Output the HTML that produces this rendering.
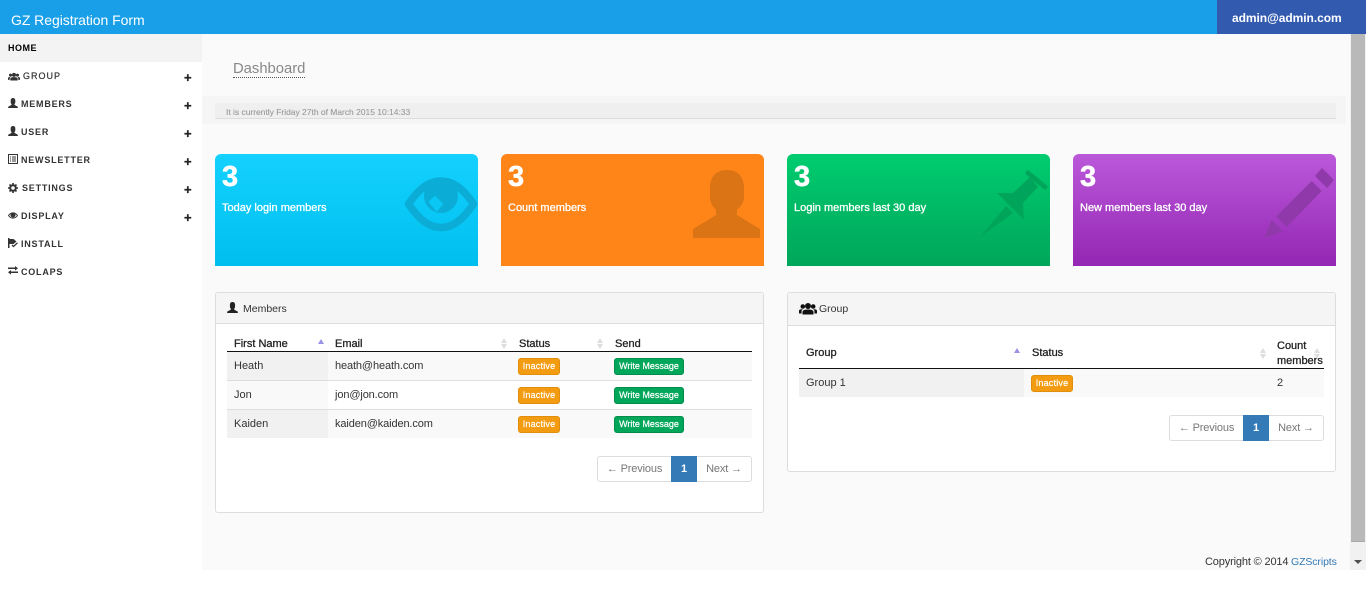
<!DOCTYPE html>
<html><head><meta charset="utf-8"><title>GZ Registration Form</title>
<style>
html,body{margin:0;padding:0;width:1366px;height:599px;overflow:hidden;background:#fff;font-family:"Liberation Sans",sans-serif;font-size:11px;color:#333}
div,span,a,svg{position:absolute;white-space:nowrap}
.n{font-size:9px;font-weight:bold;letter-spacing:.78px;color:#333;line-height:12px}
.p{font-size:13px;font-weight:bold;color:#222;line-height:12px;left:184px;-webkit-text-stroke:.3px #222}
.card{top:154px;width:263px;height:112px;border-radius:6px 6px 0 0}
.num{top:161px;font-size:29px;font-weight:bold;color:#fff;line-height:32px;-webkit-text-stroke:.5px #fff}
.lbl{top:202px;font-size:11px;color:#fff;line-height:13px;-webkit-text-stroke:.3px #fff}
.panel{background:#fff;border:1px solid #ddd;border-radius:3px;box-sizing:border-box}
.ph{background:#f5f5f5;border-bottom:1px solid #ddd;left:0;top:0;right:0;border-radius:3px 3px 0 0;box-sizing:border-box}
.t{line-height:13px}
.th{line-height:13px;color:#222;-webkit-text-stroke:.3px #222}
.b1,.b2{font-size:9px;color:#fff;border-radius:3px;box-sizing:border-box;height:17px;line-height:14px;text-align:center;-webkit-text-stroke:.2px #fff}
.b1{background:#f39c12;border:1px solid #e08e0b;width:42px;letter-spacing:.2px}
.b2{background:#00a65a;border:1px solid #008d4c;width:70px}
.pg{background:#fff;border:1px solid #ddd;box-sizing:border-box;height:26px;line-height:25px;text-align:center;color:#777;font-size:11px;letter-spacing:-.15px}
.cur{background:#337ab7;border:1px solid #337ab7;color:#fff;font-weight:bold;box-sizing:border-box;height:26px;line-height:25px;text-align:center;font-size:11px}
.up{width:0;height:0;border-left:3.5px solid transparent;border-right:3.5px solid transparent;border-bottom:5px solid #9a92e6}
.s{width:6px;height:11px}
</style></head><body>
<svg width="0" height="0" style="left:0;top:0"><defs>
<symbol id="u" viewBox="0 0 12 12"><path d="M6 0C4.200 0 3.200 1.200 3.200 3v2c0 1 .5 1.900 1 2.400V8.300L.2 10.500V12h11.600v-1.500L7.800 8.300V7.400c.5-.5 1-1.400 1-2.400V3C8.800 1.200 7.800 0 6 0z"/></symbol>
<symbol id="g" viewBox="0 0 18 12"><circle cx="9" cy="3.500" r="3"/><path d="M3.500 12V9.500C3.500 7.500 6 7 9 7s5.500.5 5.500 2.500V12z"/><circle cx="3.800" cy="4" r="2.300"/><circle cx="14.200" cy="4" r="2.300"/><path d="M0 11V8.500C0 7 1.500 6.800 3.800 6.800L2.600 8v3zM18 11V8.500C18 7 16.500 6.800 14.200 6.800L15.400 8v3z"/></symbol>
<symbol id="s" viewBox="0 0 6 11"><path d="M3 0L6 5H0zM3 11L0 6H6z" fill="#dedede"/></symbol>
</defs></svg>

<!-- top bar -->
<div style="left:0;top:0;width:1366px;height:34px;background:#189fe8"></div>
<div style="left:1217px;top:0;width:149px;height:34px;background:#325bb0"></div>
<div style="left:11px;top:11px;font-size:14px;line-height:18px;color:#fff;letter-spacing:-.05px">GZ Registration Form</div>
<div style="left:1232px;top:11px;font-size:12px;font-weight:bold;line-height:15px;color:#fff;letter-spacing:-.05px">admin@admin.com</div>

<!-- main bg -->
<div style="left:202px;top:34px;width:1148px;height:536px;background:#fafafa"></div>

<!-- scrollbar -->
<div style="left:1350px;top:34px;width:16px;height:536px;background:#f1f1f1"></div>
<div style="left:1351px;top:34px;width:14px;height:508px;background:#b9b9b9;border-bottom:1px solid #a8a8a8;box-sizing:border-box"></div>
<div style="left:1354px;top:560px;width:0;height:0;border-left:4px solid transparent;border-right:4px solid transparent;border-top:4px solid #505050"></div>

<!-- sidebar -->
<div style="left:0;top:34px;width:202px;height:28px;background:#f3f3f3"></div>
<div class="n" style="left:8px;top:42px;color:#000;letter-spacing:.5px">HOME</div>
<svg style="left:8px;top:72px" width="12" height="9" fill="#333"><use href="#g"/></svg>
<div class="n" style="left:23px;top:70px;font-weight:normal;letter-spacing:1px;-webkit-text-stroke:.2px #333">GROUP</div><div class="p" style="top:72px">+</div>
<svg style="left:8px;top:98px" width="10" height="10" fill="#333"><use href="#u"/></svg>
<div class="n" style="left:21px;top:98px">MEMBERS</div><div class="p" style="top:100px">+</div>
<svg style="left:8px;top:126px" width="10" height="10" fill="#333"><use href="#u"/></svg>
<div class="n" style="left:21px;top:126px">USER</div><div class="p" style="top:128px">+</div>
<svg style="left:8px;top:154px" width="10" height="10" fill="none" stroke="#333"><path d="M.5.500h9v9h-9zM2 3h1M4 3h4M2 5h1M4 5h4M2 7h1M4 7h4"/></svg>
<div class="n" style="left:21px;top:154px">NEWSLETTER</div><div class="p" style="top:156px">+</div>
<svg style="left:8px;top:183px" width="10" height="10" fill="none" stroke="#333"><circle cx="5" cy="5" r="2.800" stroke-width="2"/><path d="M5 0v2M5 8v2M0 5h2M8 5h2M1.500 1.500l1.200 1.200M7.300 7.300l1.200 1.200M1.500 8.500l1.200-1.200M7.300 2.700l1.200-1.200" stroke-width="1.600"/></svg>
<div class="n" style="left:22px;top:182px">SETTINGS</div><div class="p" style="top:184px">+</div>
<svg style="left:8px;top:211px" width="10" height="9" fill="none" stroke="#333"><path d="M.5 4.500C3 1 7 1 9.500 4.500 7 8 3 8 .5 4.500z"/><circle cx="5" cy="4" r="2" fill="#333"/></svg>
<div class="n" style="left:21px;top:210px">DISPLAY</div><div class="p" style="top:212px">+</div>
<svg style="left:8px;top:238px" width="10" height="10" fill="#333"><path d="M0 0h1.500v10H0zM1.500 1h4l3 2.500-3 2.500h-4z"/><path d="M4 7l1.500 1.500L9.500 4.800" fill="none" stroke="#333" stroke-width="1.300"/></svg>
<div class="n" style="left:21px;top:238px">INSTALL</div>
<svg style="left:8px;top:266px" width="10" height="9" fill="#333"><path d="M0 1.500h7V0l3 2.300-3 2.300V3H0zM10 5.500H3V4L0 6.300 3 8.600V7h7z"/></svg>
<div class="n" style="left:21px;top:266px">COLAPS</div>

<!-- dashboard heading -->
<div style="left:233px;top:61px;font-size:14.800px;line-height:16px;height:16px;color:#888;border-bottom:1px dotted #555">Dashboard</div>
<div style="left:202px;top:96px;width:1144px;height:28px;background:#f5f5f5"></div>
<div style="left:215px;top:103px;width:1121px;height:16px;background:#efefef;border-bottom:1px solid #ddd;box-sizing:border-box"></div>
<div style="left:226px;top:107px;font-size:8.500px;line-height:10px;color:#999;-webkit-text-stroke:.1px #999;letter-spacing:-.02px">It is currently Friday 27th of March 2015 10:14:33</div>

<!-- cards -->
<div class="card" style="left:215px;background:linear-gradient(#14d1ff,#00bfee)"></div>
<div class="card" style="left:501px;background:#ff8519"></div>
<div class="card" style="left:787px;background:linear-gradient(#00cc6f,#00a65a)"></div>
<div class="card" style="left:1073px;background:linear-gradient(#bb58da,#9427b3)"></div>

<div class="num" style="left:222px">3</div><div class="lbl" style="left:222px">Today login members</div>
<div class="num" style="left:508px">3</div><div class="lbl" style="left:508px">Count members</div>
<div class="num" style="left:794px">3</div><div class="lbl" style="left:794px">Login members last 30 day</div>
<div class="num" style="left:1080px">3</div><div class="lbl" style="left:1080px">New members last 30 day</div>

<!-- eye -->
<svg style="left:404px;top:177px" width="74" height="55" viewBox="0 0 74 55"><path fill="none" stroke="#0badd6" stroke-width="7.500" stroke-linejoin="round" d="M4.500 27C16 10 26 4 37 4S58 10 69.500 27C58 44 48 50.500 37 50.500S16 44 4.500 27z"/><circle cx="37" cy="19" r="17" fill="#0badd6"/><path fill="#0ac7f4" d="M24.300 24.700L31 18.700 39.300 27 32.700 34.700z"/></svg>
<!-- user -->
<svg style="left:693px;top:170px" width="68" height="68" viewBox="0 0 68 68"><path fill="#db7415" d="M34 0C23 0 17 7 17 18V27C17 33 20 37 23 40V45L0 59V68H67V59L44 45V40C47 37 51 33 51 27V18C51 7 45 0 34 0z"/></svg>
<!-- pin -->
<svg style="left:979px;top:169px" width="69" height="69" viewBox="0 0 69 69"><g fill="#00a55b"><path d="M18 24H34L51 8 59 18 44 34 45 51z"/><path d="M0 69L27 37 34 44z"/></g><path d="M49 4L66 18" stroke="#00a55b" stroke-width="5" stroke-linecap="round"/></svg>
<!-- pencil -->
<svg style="left:1264px;top:168px" width="71" height="71" viewBox="0 0 71 71"><g fill="#9039ab"><path d="M47.700 13L57.700 23 22.700 59 12 48.700z"/><path d="M7.700 52L19 63.700 0 70z"/><path d="M58 1L69 12 63 19 52 8z" stroke="#9039ab" stroke-width="1.500" stroke-linejoin="round"/></g></svg>

<!-- members panel -->
<div class="panel" style="left:215px;top:292px;width:549px;height:221px"><div class="ph" style="height:31px"></div></div>
<svg style="left:227px;top:302px" width="11" height="11" fill="#222"><use href="#u"/></svg>
<div class="t" style="left:243px;top:303px;font-size:10.500px">Members</div>

<div class="th" style="left:234px;top:338px">First Name</div>
<div class="th" style="left:335px;top:338px">Email</div>
<div class="th" style="left:519px;top:338px">Status</div>
<div class="th" style="left:615px;top:338px">Send</div>
<div class="up" style="left:318px;top:339px"></div>
<svg class="s" style="left:501px;top:338px"><use href="#s"/></svg>
<svg class="s" style="left:597px;top:338px"><use href="#s"/></svg>
<div style="left:227px;top:351px;width:525px;height:1px;background:#111"></div>
<div style="left:227px;top:352px;width:525px;height:28px;background:#f9f9f9"></div>
<div style="left:227px;top:352px;width:101px;height:28px;background:#f1f1f1"></div>
<div style="left:227px;top:380px;width:525px;height:1px;background:#ddd"></div>
<div style="left:227px;top:381px;width:525px;height:28px;background:#fff"></div>
<div style="left:227px;top:381px;width:101px;height:28px;background:#f9f9f9"></div>
<div style="left:227px;top:409px;width:525px;height:1px;background:#ddd"></div>
<div style="left:227px;top:410px;width:525px;height:28px;background:#f9f9f9"></div>
<div style="left:227px;top:410px;width:101px;height:28px;background:#f1f1f1"></div>

<div class="t" style="left:234px;top:360px">Heath</div><div class="t" style="left:335px;top:360px;letter-spacing:-.12px">heath@heath.com</div>
<div class="t" style="left:234px;top:389px">Jon</div><div class="t" style="left:335px;top:389px;letter-spacing:-.12px">jon@jon.com</div>
<div class="t" style="left:234px;top:418px">Kaiden</div><div class="t" style="left:335px;top:418px;letter-spacing:-.12px">kaiden@kaiden.com</div>

<div class="b1" style="left:518px;top:358px">Inactive</div><div class="b2" style="left:614px;top:358px">Write Message</div>
<div class="b1" style="left:518px;top:387px">Inactive</div><div class="b2" style="left:614px;top:387px">Write Message</div>
<div class="b1" style="left:518px;top:416px">Inactive</div><div class="b2" style="left:614px;top:416px">Write Message</div>

<div class="pg" style="left:597px;top:456px;width:75px;border-radius:3px 0 0 3px">← Previous</div>
<div class="cur" style="left:671px;top:456px;width:26px">1</div>
<div class="pg" style="left:697px;top:456px;width:55px;border-left:0;border-radius:0 3px 3px 0">Next →</div>

<!-- group panel -->
<div class="panel" style="left:787px;top:292px;width:549px;height:180px"><div class="ph" style="height:33px"></div></div>
<svg style="left:799px;top:302px" width="18" height="13" fill="#111"><use href="#g"/></svg>
<div class="t" style="left:819px;top:303px;font-size:10.500px">Group</div>

<div class="th" style="left:806px;top:347px">Group</div>
<div class="th" style="left:1032px;top:347px">Status</div>
<div class="th" style="left:1277px;top:339px;line-height:15px">Count<br>members</div>
<div class="up" style="left:1014px;top:348px"></div>
<svg class="s" style="left:1260px;top:348px"><use href="#s"/></svg>
<svg class="s" style="left:1314px;top:348px"><use href="#s"/></svg>
<div style="left:799px;top:368px;width:525px;height:1px;background:#111"></div>
<div style="left:799px;top:369px;width:525px;height:28px;background:#f9f9f9"></div>
<div style="left:799px;top:369px;width:225px;height:28px;background:#f1f1f1"></div>
<div class="t" style="left:806px;top:377px">Group 1</div>
<div class="b1" style="left:1031px;top:375px">Inactive</div>
<div class="t" style="left:1277px;top:377px">2</div>

<div class="pg" style="left:1169px;top:415px;width:75px;border-radius:3px 0 0 3px">← Previous</div>
<div class="cur" style="left:1243px;top:415px;width:26px">1</div>
<div class="pg" style="left:1269px;top:415px;width:55px;border-left:0;border-radius:0 3px 3px 0">Next →</div>

<!-- footer -->
<div class="t" style="left:1205px;top:556px;letter-spacing:-.15px">Copyright © 2014</div>
<div class="t" style="left:1291px;top:556px;font-size:10.500px;letter-spacing:-.1px;color:#337ab7">GZScripts</div>
</body></html>
